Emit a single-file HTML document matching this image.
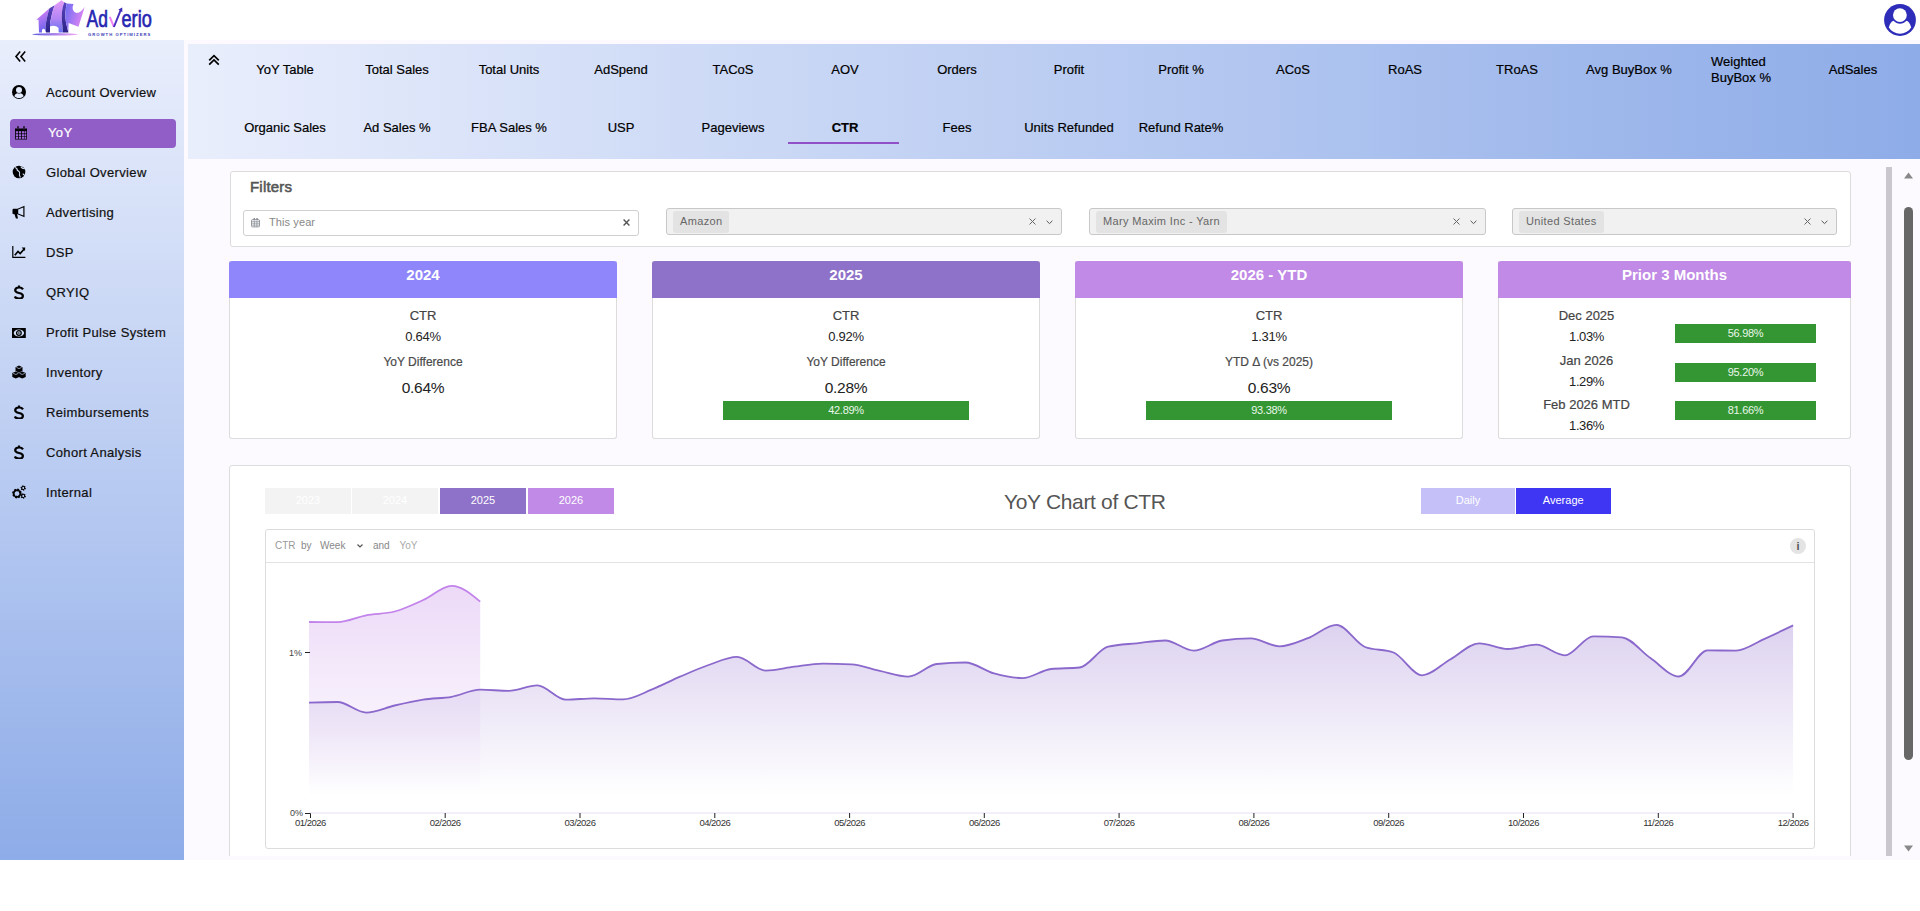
<!DOCTYPE html><html><head><meta charset="utf-8"><style>
*{box-sizing:border-box}
html,body{margin:0;padding:0}
body{width:1920px;height:911px;overflow:hidden;position:relative;background:#fff;font-family:"Liberation Sans", sans-serif;color:#222}
.a{position:absolute}
.tab{position:absolute;width:112px;text-align:center;font-size:13px;color:#000;white-space:nowrap;line-height:16px;-webkit-text-stroke:0.2px #000}
.sb{position:absolute;left:46px;font-size:13px;color:#000;line-height:16px;white-space:nowrap;letter-spacing:0.35px;-webkit-text-stroke:0.2px currentColor}
.ic{position:absolute;left:12px;width:14px;height:14px}
.inp{position:absolute;border:1px solid #d0d0d0;border-radius:3px}
.chip{position:absolute;background:#e3e3e3;border-radius:3px;font-size:11px;color:#666;line-height:20px;padding:0 7px;white-space:nowrap;letter-spacing:0.35px}
.card{position:absolute;background:#fff;border:1px solid #dcdcdc;border-radius:3px;overflow:hidden}
.ch{position:absolute;left:-1px;top:0;width:calc(100% + 2px);height:37px;border-radius:3px 3px 0 0;color:#fff;font-weight:700;font-size:15px;text-align:center;line-height:28px}
.ct{position:absolute;left:0;width:100%;text-align:center;white-space:nowrap}
.bar{position:absolute;background:#339633;color:#eaf6ea;font-size:11px;text-align:center;line-height:19px;letter-spacing:-0.3px}
.yb{position:absolute;top:488px;height:26px;width:86px;color:#fff;font-size:11px;text-align:center;line-height:24px}
.xl{position:absolute;top:817px;font-size:9.5px;color:#333;width:60px;text-align:center;white-space:nowrap;letter-spacing:-0.5px}
</style></head><body>
<div class="a" style="left:0;top:0;width:1920px;height:40px;background:#fff"></div>
<svg class="a" style="left:28px;top:0" width="130" height="40" viewBox="0 0 130 40">
<defs>
<linearGradient id="ga" x1="0" y1="0" x2="0.3" y2="1"><stop offset="0" stop-color="#ea88f6"/><stop offset="1" stop-color="#6c62ee"/></linearGradient>
<linearGradient id="gb" x1="0" y1="0" x2="0" y2="1"><stop offset="0" stop-color="#5a44c0"/><stop offset="1" stop-color="#2c2286"/></linearGradient>
<linearGradient id="gc" x1="0" y1="0" x2="0" y2="1"><stop offset="0" stop-color="#e59cf8"/><stop offset=".55" stop-color="#b486f4"/><stop offset="1" stop-color="#6670f0"/></linearGradient>
<linearGradient id="ge" x1="0" y1="0" x2="1" y2="0.4"><stop offset="0" stop-color="#6c6cf2"/><stop offset="1" stop-color="#e086f4"/></linearGradient>
<linearGradient id="rg2" x1="0" y1="0" x2="1" y2="0"><stop offset="0" stop-color="#5a5ae0"/><stop offset="1" stop-color="#e890f2" stop-opacity=".8"/></linearGradient>
</defs>
<path d="M8.3,19.8 L21.5,8.2 C19.5,14 18,22 17.6,26.5 L18,32.5 L16.8,29.5 C15.5,28 13.5,28.5 14,32.5 L11,32.5 L10.5,19.8 Z" fill="url(#ga)"/>
<path d="M21.5,8.2 L26.6,5.2 C24.5,11 22.8,18 22,24.5 L22,32.5 L18,32.5 L17.6,26.5 C18,22 19.5,14 21.5,8.2Z" fill="url(#gb)"/>
<path d="M26.6,5.2 L33.4,0.3 L36.2,2.2 C33.8,8 33.3,16 34,22 L35,32.5 L30.7,32.5 L30.5,28 C28.5,25.6 24.5,25.2 22,26.4 L22,24.5 C22.8,18 24.5,11 26.6,5.2Z" fill="url(#gc)"/>
<path d="M36.2,2.2 L38.8,3.6 C37.2,10 37,17 38,22.5 L40.4,32.5 L35,32.5 L34,22 C33.3,16 33.8,8 36.2,2.2Z" fill="url(#gb)"/>
<path d="M38.8,3.6 L45.7,4 C43.8,7 44.5,11.2 47.5,12.6 C50.5,13.8 54,11 56.7,7 L52.7,19.8 L50.5,26.8 L40.6,23 L40.4,32.5 L38,22.5 C37,17 37.2,10 38.8,3.6Z" fill="url(#ge)"/>
<ellipse cx="27" cy="34.3" rx="23" ry="1.3" fill="url(#rg2)"/>
<text x="58.6" y="27.2" font-family="Liberation Sans" font-size="24" fill="#2626b2" stroke="#2626b2" stroke-width="0.7" textLength="21.3" lengthAdjust="spacingAndGlyphs">Ad</text>
<path d="M81.8,16.8 L85.9,27" stroke="#f07ef4" stroke-width="2" fill="none"/>
<path d="M85.9,27 L92.8,9.8" stroke="#4a30c0" stroke-width="2" fill="none"/>
<path d="M90.5,9.6 L94.2,7.6 L94.4,12.3Z" fill="#3a2cb8"/>
<text x="93.5" y="27.2" font-family="Liberation Sans" font-size="24" fill="#2626b2" stroke="#2626b2" stroke-width="0.7" textLength="30.3" lengthAdjust="spacingAndGlyphs">erio</text>
<text x="60" y="36" font-family="Liberation Sans" font-size="4.2" font-weight="700" fill="#3a3ab8" textLength="62.3" lengthAdjust="spacing">GROWTH OPTIMIZERS</text>
</svg>
<svg class="a" style="left:1884px;top:4px" width="32" height="32" viewBox="0 0 32 32"><circle cx="16" cy="16" r="15.9" fill="#2d2db9"/><circle cx="15.9" cy="11.1" r="6.9" fill="#fff"/><path d="M4.8,23.5 C6,19 8,17 9.5,16.8 C11.5,18.8 13.5,19.7 16,19.7 C18.5,19.7 20.5,18.8 22.5,16.8 C24,17 26,19 27.2,23.5 C24.5,27.5 20.5,29.7 16,29.7 C11.5,29.7 7.5,27.5 4.8,23.5 Z" fill="#fff"/></svg>
<div class="a" style="left:0;top:40px;width:1920px;height:820px;background:#fcfaff"></div>
<div class="a" style="left:0;top:40px;width:184px;height:820px;background:linear-gradient(#e9eefc,#8eace8)"></div>
<div class="a" style="left:10px;top:119px;width:166px;height:29px;background:#915ec7;border-radius:4px"></div>
<div class="sb" style="top:85px;left:46px;color:#111">Account Overview</div>
<div class="sb" style="top:125px;left:48px;color:#fff">YoY</div>
<div class="sb" style="top:165px;left:46px;color:#111">Global Overview</div>
<div class="sb" style="top:205px;left:46px;color:#111">Advertising</div>
<div class="sb" style="top:245px;left:46px;color:#111">DSP</div>
<div class="sb" style="top:285px;left:46px;color:#111">QRYIQ</div>
<div class="sb" style="top:325px;left:46px;color:#111">Profit Pulse System</div>
<div class="sb" style="top:365px;left:46px;color:#111">Inventory</div>
<div class="sb" style="top:405px;left:46px;color:#111">Reimbursements</div>
<div class="sb" style="top:445px;left:46px;color:#111">Cohort Analysis</div>
<div class="sb" style="top:485px;left:46px;color:#111">Internal</div>
<svg class="a" style="left:14px;top:50px" width="13" height="13" viewBox="0 0 13 13"><path d="M6.2,1.6 L2,6.5 L6.2,11.4 M11.2,1.6 L7,6.5 L11.2,11.4" stroke="#000" stroke-width="1.6" fill="none"/></svg>
<svg class="a" style="left:12.1px;top:85px" width="14" height="14" viewBox="0 0 14 14"><circle cx="7" cy="7" r="7" fill="#000"/><circle cx="7" cy="5" r="3" fill="#e3eafb"/><path d="M2.4,11.2 C3,9 4.5,8.2 5.5,8.2 C6.4,8.6 7.6,8.6 8.5,8.2 C9.5,8.2 11,9 11.6,11.2 C10.5,12.4 9,13 7,13 C5,13 3.5,12.4 2.4,11.2Z" fill="#e3eafb"/></svg>
<svg class="a" style="left:14.2px;top:126px" width="14" height="14" viewBox="0 0 14 14"><path d="M1,2.5 H13 V13.5 H1Z" fill="#000"/><rect x="3" y="0.2" width="2" height="3.5" rx="1" fill="#000"/><rect x="9" y="0.2" width="2" height="3.5" rx="1" fill="#000"/><rect x="3.6" y="1" width="0.8" height="2.4" fill="#7a4fb0"/><rect x="9.6" y="1" width="0.8" height="2.4" fill="#7a4fb0"/><g fill="#a066dc"><rect x="1.8" y="5.2" width="2.2" height="2.2"/><rect x="4.8" y="5.2" width="2.2" height="2.2"/><rect x="7.8" y="5.2" width="2.2" height="2.2"/><rect x="10.5" y="5.2" width="1.8" height="2.2"/><rect x="1.8" y="8.2" width="2.2" height="2.2"/><rect x="4.8" y="8.2" width="2.2" height="2.2"/><rect x="7.8" y="8.2" width="2.2" height="2.2"/><rect x="10.5" y="8.2" width="1.8" height="2.2"/><rect x="1.8" y="11" width="2.2" height="1.8"/><rect x="4.8" y="11" width="2.2" height="1.8"/><rect x="7.8" y="11" width="2.2" height="1.8"/><rect x="10.5" y="11" width="1.8" height="1.8"/></g></svg>
<svg class="a" style="left:12.1px;top:165px" width="14" height="14" viewBox="0 0 14 14"><circle cx="7" cy="7" r="6.3" fill="#000"/><path d="M3.2,2.6 C4.6,3.2 5.6,3.8 5.2,5.2 C6.2,6.4 8,6.2 7.6,8.2 C6.8,9.6 7.4,10.8 8.4,12.6 M8.8,1.6 C9.6,2.8 10.8,3.6 12.2,3.8 M10.8,8.6 C11.4,9.4 12,10 12.6,10" stroke="#d6e0f8" stroke-width="1.1" fill="none"/></svg>
<svg class="a" style="left:12.1px;top:205px" width="14" height="14" viewBox="0 0 14 14"><path d="M0.5,5 C0.5,4.2 1,3.8 1.8,3.8 L5.5,3.8 L12.5,0.8 L12.5,12.2 L5.5,9.2 L1.8,9.2 C1,9.2 0.5,8.8 0.5,8 Z" fill="#000"/><path d="M6.2,4.6 L11.3,2.5 L11.3,10.5 L6.2,8.4Z" fill="#d6e0f8"/><path d="M2.5,9 L3.6,12.8 C3.8,13.4 4.2,13.6 4.8,13.6 L6,13.6 L5,9Z" fill="#000"/></svg>
<svg class="a" style="left:12.1px;top:245px" width="14" height="14" viewBox="0 0 14 14"><path d="M0.8,1 L0.8,12.4 L13.4,12.4" stroke="#000" stroke-width="1.2" fill="none"/><path d="M2.8,10.2 L6,6.4 L8.2,8.6 L12.2,4" stroke="#000" stroke-width="1.7" fill="none"/><path d="M9.6,2.6 L13.2,2.4 L13,6Z" fill="#000"/></svg>
<svg class="a" style="left:12.1px;top:285px" width="14" height="14" viewBox="0 0 14 14"><path d="M11,4.4 C10.2,3 8.8,2.5 7,2.5 C4.8,2.5 3.2,3.6 3.2,5.3 C3.2,7.1 5,7.6 7,8 C9.2,8.4 10.9,9 10.9,10.9 C10.9,12.6 9.2,13.6 7,13.6 C5,13.6 3.5,13 2.8,11.5 M7,0.4 V2.5 M7,13.6 V15.6" stroke="#000" stroke-width="2.2" fill="none"/></svg>
<svg class="a" style="left:12.1px;top:325px" width="14" height="14" viewBox="0 0 14 14"><rect x="0" y="3" width="13.8" height="10" fill="#000"/><ellipse cx="6.9" cy="8" rx="5.2" ry="3.5" fill="#d2ddf6"/><circle cx="6.9" cy="8" r="2.3" fill="none" stroke="#000" stroke-width="1.3"/><path d="M6.9,6.8 V9.2" stroke="#000" stroke-width="0.9"/></svg>
<svg class="a" style="left:12.1px;top:365px" width="14" height="14" viewBox="0 0 14 14"><path d="M7,0.5 L10.5,2.2 L10.5,6 L7,7.6 L3.5,6 L3.5,2.2Z" fill="#000"/><path d="M3.8,6.4 L7.3,8.1 L7.3,11.9 L3.8,13.6 L0.3,11.9 L0.3,8.1Z" fill="#000"/><path d="M10.2,6.4 L13.7,8.1 L13.7,11.9 L10.2,13.6 L6.7,11.9 L6.7,8.1Z" fill="#000"/><path d="M4.4,2.4 L7,3.6 L9.6,2.4 M1.2,8.3 L3.8,9.5 L6.4,8.3 M7.6,8.3 L10.2,9.5 L12.8,8.3" stroke="#c9d6f3" stroke-width="0.7" fill="none"/></svg>
<svg class="a" style="left:12.1px;top:405px" width="14" height="14" viewBox="0 0 14 14"><path d="M11,4.4 C10.2,3 8.8,2.5 7,2.5 C4.8,2.5 3.2,3.6 3.2,5.3 C3.2,7.1 5,7.6 7,8 C9.2,8.4 10.9,9 10.9,10.9 C10.9,12.6 9.2,13.6 7,13.6 C5,13.6 3.5,13 2.8,11.5 M7,0.4 V2.5 M7,13.6 V15.6" stroke="#000" stroke-width="2.2" fill="none"/></svg>
<svg class="a" style="left:12.1px;top:445px" width="14" height="14" viewBox="0 0 14 14"><path d="M11,4.4 C10.2,3 8.8,2.5 7,2.5 C4.8,2.5 3.2,3.6 3.2,5.3 C3.2,7.1 5,7.6 7,8 C9.2,8.4 10.9,9 10.9,10.9 C10.9,12.6 9.2,13.6 7,13.6 C5,13.6 3.5,13 2.8,11.5 M7,0.4 V2.5 M7,13.6 V15.6" stroke="#000" stroke-width="2.2" fill="none"/></svg>
<svg class="a" style="left:12.1px;top:485px" width="14" height="14" viewBox="0 0 14 14"><circle cx="5" cy="8.5" r="3.6" fill="none" stroke="#000" stroke-width="2.6" stroke-dasharray="1.6 1.2"/><circle cx="5" cy="8.5" r="3.4" fill="none" stroke="#000" stroke-width="1.6"/><circle cx="5" cy="8.5" r="1.3" fill="#bccbf0"/><circle cx="11.2" cy="3" r="1.9" fill="none" stroke="#000" stroke-width="1.5" stroke-dasharray="1 0.8"/><circle cx="11.2" cy="3" r="1.6" fill="none" stroke="#000" stroke-width="1"/><circle cx="11.2" cy="11" r="1.9" fill="none" stroke="#000" stroke-width="1.5" stroke-dasharray="1 0.8"/><circle cx="11.2" cy="11" r="1.6" fill="none" stroke="#000" stroke-width="1"/></svg>
<div class="a" style="left:188px;top:44px;width:1732px;height:115px;background:linear-gradient(to right,#e9eefc,#8eace8)"></div>
<svg class="a" style="left:208px;top:54px" width="12" height="12" viewBox="0 0 12 12"><path d="M1.2,6.3 L6,1.6 L10.8,6.3 M1.2,10.6 L6,5.9 L10.8,10.6" stroke="#000" stroke-width="1.7" fill="none"/></svg>
<div class="tab" style="left:229px;top:62px">YoY Table</div>
<div class="tab" style="left:341px;top:62px">Total Sales</div>
<div class="tab" style="left:453px;top:62px">Total Units</div>
<div class="tab" style="left:565px;top:62px">AdSpend</div>
<div class="tab" style="left:677px;top:62px">TACoS</div>
<div class="tab" style="left:789px;top:62px">AOV</div>
<div class="tab" style="left:901px;top:62px">Orders</div>
<div class="tab" style="left:1013px;top:62px">Profit</div>
<div class="tab" style="left:1125px;top:62px">Profit %</div>
<div class="tab" style="left:1237px;top:62px">ACoS</div>
<div class="tab" style="left:1349px;top:62px">RoAS</div>
<div class="tab" style="left:1461px;top:62px">TRoAS</div>
<div class="tab" style="left:1573px;top:62px">Avg BuyBox %</div>
<div class="tab" style="left:1685px;top:54px;line-height:16px;text-align:center"><div style="display:inline-block;text-align:left">Weighted<br>BuyBox %</div></div>
<div class="tab" style="left:1797px;top:62px">AdSales</div>
<div class="tab" style="left:229px;top:120px;">Organic Sales</div>
<div class="tab" style="left:341px;top:120px;">Ad Sales %</div>
<div class="tab" style="left:453px;top:120px;">FBA Sales %</div>
<div class="tab" style="left:565px;top:120px;">USP</div>
<div class="tab" style="left:677px;top:120px;">Pageviews</div>
<div class="tab" style="left:789px;top:120px;font-weight:700;color:#000">CTR</div>
<div class="tab" style="left:901px;top:120px;">Fees</div>
<div class="tab" style="left:1013px;top:120px;">Units Refunded</div>
<div class="tab" style="left:1125px;top:120px;">Refund Rate%</div>
<div class="a" style="left:788px;top:142px;width:111px;height:2px;background:#9050c8"></div>
<div class="card" style="left:230px;top:171px;width:1621px;height:76px"></div>
<div class="a" style="left:250px;top:178px;font-size:15px;font-weight:400;color:#555;line-height:17px;-webkit-text-stroke:0.55px #555;letter-spacing:0.2px">Filters</div>
<div class="inp" style="left:243px;top:210px;width:396px;height:26px;background:#fff"></div>
<svg class="a" style="left:251px;top:217.8px" width="9" height="10" viewBox="0 0 9 10"><rect x="2.6" y="0" width="1.3" height="2.2" fill="#7d818b"/><rect x="5.4" y="0" width="1.3" height="2.2" fill="#7d818b"/><rect x="0.5" y="1.6" width="8" height="7.3" rx="1" fill="none" stroke="#80858e" stroke-width="0.8"/><path d="M0.5,3.3 H8.5 M3.3,3.3 V8.9 M5.9,3.3 V8.9 M0.5,5.2 H8.5 M0.5,7.1 H8.5" stroke="#80858e" stroke-width="0.7"/></svg>
<div class="a" style="left:269px;top:215px;font-size:11px;color:#888;line-height:14px;letter-spacing:0.1px">This year</div>
<svg class="a" style="left:623px;top:219px" width="7" height="7" viewBox="0 0 7 7"><path d="M0.6,0.6 L6.4,6.4 M6.4,0.6 L0.6,6.4" stroke="#555" stroke-width="1.4"/></svg>
<div class="inp" style="left:666px;top:208px;width:396px;height:27px;background:#f1f1f1;border-color:#c8c8c8"></div>
<div class="chip" style="left:673px;top:210.5px;height:22px">Amazon</div>
<svg class="a" style="left:1029px;top:218px" width="7" height="7" viewBox="0 0 7 7"><path d="M0.5,0.5 L6.5,6.5 M6.5,0.5 L0.5,6.5" stroke="#666" stroke-width="1"/></svg>
<svg class="a" style="left:1046px;top:219.5px" width="7" height="5" viewBox="0 0 7 5"><path d="M0.6,0.8 L3.5,3.6 L6.4,0.8" stroke="#555" stroke-width="1" fill="none"/></svg>
<div class="inp" style="left:1089px;top:208px;width:397px;height:27px;background:#f1f1f1;border-color:#c8c8c8"></div>
<div class="chip" style="left:1096px;top:210.5px;height:22px">Mary Maxim Inc - Yarn</div>
<svg class="a" style="left:1453px;top:218px" width="7" height="7" viewBox="0 0 7 7"><path d="M0.5,0.5 L6.5,6.5 M6.5,0.5 L0.5,6.5" stroke="#666" stroke-width="1"/></svg>
<svg class="a" style="left:1470px;top:219.5px" width="7" height="5" viewBox="0 0 7 5"><path d="M0.6,0.8 L3.5,3.6 L6.4,0.8" stroke="#555" stroke-width="1" fill="none"/></svg>
<div class="inp" style="left:1512px;top:208px;width:325px;height:27px;background:#f1f1f1;border-color:#c8c8c8"></div>
<div class="chip" style="left:1519px;top:210.5px;height:22px">United States</div>
<svg class="a" style="left:1804px;top:218px" width="7" height="7" viewBox="0 0 7 7"><path d="M0.5,0.5 L6.5,6.5 M6.5,0.5 L0.5,6.5" stroke="#666" stroke-width="1"/></svg>
<svg class="a" style="left:1821px;top:219.5px" width="7" height="5" viewBox="0 0 7 5"><path d="M0.6,0.8 L3.5,3.6 L6.4,0.8" stroke="#555" stroke-width="1" fill="none"/></svg>
<div class="card" style="left:229px;top:260px;width:388px;height:179px;overflow:visible;border-top-color:transparent"><div class="ch" style="background:#8f86fb">2024</div></div>
<div class="card" style="left:652px;top:260px;width:388px;height:179px;overflow:visible;border-top-color:transparent"><div class="ch" style="background:#8e71c8">2025</div></div>
<div class="card" style="left:1075px;top:260px;width:388px;height:179px;overflow:visible;border-top-color:transparent"><div class="ch" style="background:#c08ae6">2026 - YTD</div></div>
<div class="card" style="left:1498px;top:260px;width:353px;height:179px;overflow:visible;border-top-color:transparent"><div class="ch" style="background:#c08ae6">Prior 3 Months</div></div>
<div class="ct" style="left:229px;width:388px;top:308px;font-size:13px;color:#444;line-height:16px;-webkit-text-stroke:0.2px #444">CTR</div>
<div class="ct" style="left:229px;width:388px;top:329px;font-size:13px;color:#222;line-height:16px;letter-spacing:-0.3px">0.64%</div>
<div class="ct" style="left:229px;width:388px;top:355px;font-size:12px;color:#4a4a4a;line-height:14px;font-weight:400;-webkit-text-stroke:0.2px #4a4a4a">YoY Difference</div>
<div class="ct" style="left:229px;width:388px;top:379px;font-size:15.5px;color:#222;line-height:18px;letter-spacing:-0.3px">0.64%</div>
<div class="ct" style="left:652px;width:388px;top:308px;font-size:13px;color:#444;line-height:16px;-webkit-text-stroke:0.2px #444">CTR</div>
<div class="ct" style="left:652px;width:388px;top:329px;font-size:13px;color:#222;line-height:16px;letter-spacing:-0.3px">0.92%</div>
<div class="ct" style="left:652px;width:388px;top:355px;font-size:12px;color:#4a4a4a;line-height:14px;font-weight:400;-webkit-text-stroke:0.2px #4a4a4a">YoY Difference</div>
<div class="ct" style="left:652px;width:388px;top:379px;font-size:15.5px;color:#222;line-height:18px;letter-spacing:-0.3px">0.28%</div>
<div class="bar" style="left:723.0px;top:401px;width:246px;height:19px">42.89%</div>
<div class="ct" style="left:1075px;width:388px;top:308px;font-size:13px;color:#444;line-height:16px;-webkit-text-stroke:0.2px #444">CTR</div>
<div class="ct" style="left:1075px;width:388px;top:329px;font-size:13px;color:#222;line-height:16px;letter-spacing:-0.3px">1.31%</div>
<div class="ct" style="left:1075px;width:388px;top:355px;font-size:12px;color:#4a4a4a;line-height:14px;font-weight:400;-webkit-text-stroke:0.2px #4a4a4a">YTD &#916; (vs 2025)</div>
<div class="ct" style="left:1075px;width:388px;top:379px;font-size:15.5px;color:#222;line-height:18px;letter-spacing:-0.3px">0.63%</div>
<div class="bar" style="left:1146.0px;top:401px;width:246px;height:19px">93.38%</div>
<div class="ct" style="left:1498px;width:177px;top:308px;font-size:13px;color:#444;line-height:16px;-webkit-text-stroke:0.2px #444">Dec 2025</div>
<div class="ct" style="left:1498px;width:177px;top:329px;font-size:13px;color:#222;line-height:16px;letter-spacing:-0.4px">1.03%</div>
<div class="bar" style="left:1675px;top:324px;width:141px;height:19px">56.98%</div>
<div class="ct" style="left:1498px;width:177px;top:353px;font-size:13px;color:#444;line-height:16px;-webkit-text-stroke:0.2px #444">Jan 2026</div>
<div class="ct" style="left:1498px;width:177px;top:374px;font-size:13px;color:#222;line-height:16px;letter-spacing:-0.4px">1.29%</div>
<div class="bar" style="left:1675px;top:363px;width:141px;height:19px">95.20%</div>
<div class="ct" style="left:1498px;width:177px;top:397px;font-size:13px;color:#444;line-height:16px;-webkit-text-stroke:0.2px #444">Feb 2026 MTD</div>
<div class="ct" style="left:1498px;width:177px;top:418px;font-size:13px;color:#222;line-height:16px;letter-spacing:-0.4px">1.36%</div>
<div class="bar" style="left:1675px;top:401px;width:141px;height:19px">81.66%</div>
<div class="a" style="left:229px;top:465px;width:1622px;height:391px;overflow:hidden"><div class="card" style="left:0;top:0;width:1622px;height:420px"></div></div>
<div class="yb" style="left:265px;background:#f3f3f3">2023</div>
<div class="yb" style="left:352px;background:#f3f3f3">2024</div>
<div class="yb" style="left:440px;background:#8e71c8">2025</div>
<div class="yb" style="left:528px;background:#c08ae6">2026</div>
<div class="a" style="left:1004px;top:490px;font-size:21px;color:#555;line-height:24px;white-space:nowrap;letter-spacing:-0.33px">YoY Chart of CTR</div>
<div class="yb" style="left:1421px;width:94px;background:#c5c1f8">Daily</div>
<div class="yb" style="left:1516px;width:94.5px;background:#3f36f4">Average</div>
<div class="a" style="left:265px;top:529px;width:1550px;height:320px;border:1px solid #dcdcdc;border-radius:3px;background:#fff"></div>
<div class="a" style="left:266px;top:562px;width:1548px;height:1px;background:#e2e2e2"></div>
<div class="a" style="left:275px;top:540px;font-size:10px;color:#999;line-height:12px;white-space:nowrap">CTR</div>
<div class="a" style="left:301px;top:540px;font-size:10px;color:#888;line-height:12px;white-space:nowrap">by</div>
<div class="a" style="left:320px;top:540px;font-size:10px;color:#888;line-height:12px;white-space:nowrap">Week</div>
<div class="a" style="left:373px;top:540px;font-size:10px;color:#888;line-height:12px;white-space:nowrap">and</div>
<div class="a" style="left:399.5px;top:540px;font-size:10px;color:#aaa;line-height:12px;white-space:nowrap">YoY</div>
<svg class="a" style="left:357px;top:544px" width="6" height="4" viewBox="0 0 6 4"><path d="M0.5,0.5 L3,3 L5.5,0.5" stroke="#555" stroke-width="1.2" fill="none"/></svg>
<div class="a" style="left:1790px;top:538px;width:16px;height:16px;border-radius:8px;background:#e4e4e4;color:#555;font-size:11px;font-weight:700;text-align:center;line-height:16px">i</div>
<svg class="a" style="left:0;top:0" width="1920" height="911">
<defs>
<linearGradient id="g25" x1="0" y1="0" x2="0" y2="1" gradientUnits="objectBoundingBox"><stop offset="0" stop-color="#d9cdee" stop-opacity=".9"/><stop offset="1" stop-color="#d9cdee" stop-opacity="0"/></linearGradient>
<linearGradient id="g26" x1="0" y1="0" x2="0" y2="1"><stop offset="0" stop-color="#e6cdf5" stop-opacity=".75"/><stop offset="1" stop-color="#e6cdf5" stop-opacity="0"/></linearGradient>
</defs>
<path d="M309.0,622.0C318.5,622.0 328.0,622.1 337.5,622.1C347.1,622.1 356.6,617.1 366.1,615.3C375.6,613.5 385.1,614.0 394.6,611.5C404.1,609.0 413.6,604.3 423.2,600.0C432.7,595.7 442.2,585.8 451.7,585.8C461.2,585.8 470.7,593.7 480.2,601.6 L480.2,792 L309,792 Z" fill="url(#g26)"/>
<path d="M309.0,702.6C318.5,702.3 328.0,702.0 337.5,702.0C347.1,702.0 356.6,712.6 366.1,712.6C375.6,712.6 385.1,707.7 394.6,705.5C404.1,703.3 413.6,701.1 423.2,699.6C432.7,698.1 442.2,698.4 451.7,696.8C461.2,695.1 470.7,689.7 480.2,689.7C489.8,689.7 499.3,690.8 508.8,690.8C518.3,690.8 527.8,685.3 537.3,685.3C546.8,685.3 556.3,699.7 565.9,699.7C575.4,699.7 584.9,698.3 594.4,698.3C603.9,698.3 613.4,699.4 622.9,699.4C632.5,699.4 642.0,693.5 651.5,689.7C661.0,685.9 670.5,680.8 680.0,676.7C689.5,672.6 699.1,668.3 708.6,665.0C718.1,661.7 727.6,656.9 737.1,656.9C746.6,656.9 756.1,670.6 765.6,670.6C775.2,670.6 784.7,667.9 794.2,666.7C803.7,665.5 813.2,663.6 822.7,663.6C832.2,663.6 841.8,663.9 851.3,664.4C860.8,664.9 870.3,668.9 879.8,670.9C889.3,672.9 898.8,676.6 908.3,676.6C917.9,676.6 927.4,665.0 936.9,664.0C946.4,663.0 955.9,662.5 965.4,662.5C974.9,662.5 984.5,670.8 994.0,673.4C1003.5,676.0 1013.0,678.1 1022.5,678.1C1032.0,678.1 1041.5,670.0 1051.0,669.0C1060.6,668.0 1070.1,668.5 1079.6,667.5C1089.1,666.5 1098.6,649.0 1108.1,646.7C1117.6,644.4 1127.2,644.3 1136.7,643.3C1146.2,642.3 1155.7,640.5 1165.2,640.5C1174.7,640.5 1184.2,650.6 1193.8,650.6C1203.3,650.6 1212.8,641.9 1222.3,640.5C1231.8,639.1 1241.3,638.4 1250.8,638.4C1260.3,638.4 1269.9,646.3 1279.4,646.3C1288.9,646.3 1298.4,641.7 1307.9,638.1C1317.4,634.5 1326.9,624.8 1336.5,624.8C1346.0,624.8 1355.5,643.3 1365.0,647.0C1374.5,650.7 1384.0,648.8 1393.5,652.5C1403.0,656.2 1412.6,675.3 1422.1,675.3C1431.6,675.3 1441.1,664.5 1450.6,659.2C1460.1,653.9 1469.6,643.3 1479.2,643.3C1488.7,643.3 1498.2,649.0 1507.7,649.0C1517.2,649.0 1526.7,644.7 1536.2,644.7C1545.8,644.7 1555.3,655.3 1564.8,655.3C1574.3,655.3 1583.8,636.3 1593.3,636.3C1602.8,636.3 1612.3,636.6 1621.9,637.3C1631.4,638.0 1640.9,651.6 1650.4,658.1C1659.9,664.6 1669.4,676.5 1678.9,676.5C1688.5,676.5 1698.0,650.4 1707.5,650.4C1717.0,650.4 1726.5,650.6 1736.0,650.6C1745.5,650.6 1755.0,642.9 1764.6,638.8C1774.1,634.5 1783.6,630.0 1793.1,625.4 L1793.1,796 L309,796 Z" fill="url(#g25)"/>
<path d="M309.0,622.0C318.5,622.0 328.0,622.1 337.5,622.1C347.1,622.1 356.6,617.1 366.1,615.3C375.6,613.5 385.1,614.0 394.6,611.5C404.1,609.0 413.6,604.3 423.2,600.0C432.7,595.7 442.2,585.8 451.7,585.8C461.2,585.8 470.7,593.7 480.2,601.6" fill="none" stroke="#c283ea" stroke-width="1.8"/>
<path d="M309.0,702.6C318.5,702.3 328.0,702.0 337.5,702.0C347.1,702.0 356.6,712.6 366.1,712.6C375.6,712.6 385.1,707.7 394.6,705.5C404.1,703.3 413.6,701.1 423.2,699.6C432.7,698.1 442.2,698.4 451.7,696.8C461.2,695.1 470.7,689.7 480.2,689.7C489.8,689.7 499.3,690.8 508.8,690.8C518.3,690.8 527.8,685.3 537.3,685.3C546.8,685.3 556.3,699.7 565.9,699.7C575.4,699.7 584.9,698.3 594.4,698.3C603.9,698.3 613.4,699.4 622.9,699.4C632.5,699.4 642.0,693.5 651.5,689.7C661.0,685.9 670.5,680.8 680.0,676.7C689.5,672.6 699.1,668.3 708.6,665.0C718.1,661.7 727.6,656.9 737.1,656.9C746.6,656.9 756.1,670.6 765.6,670.6C775.2,670.6 784.7,667.9 794.2,666.7C803.7,665.5 813.2,663.6 822.7,663.6C832.2,663.6 841.8,663.9 851.3,664.4C860.8,664.9 870.3,668.9 879.8,670.9C889.3,672.9 898.8,676.6 908.3,676.6C917.9,676.6 927.4,665.0 936.9,664.0C946.4,663.0 955.9,662.5 965.4,662.5C974.9,662.5 984.5,670.8 994.0,673.4C1003.5,676.0 1013.0,678.1 1022.5,678.1C1032.0,678.1 1041.5,670.0 1051.0,669.0C1060.6,668.0 1070.1,668.5 1079.6,667.5C1089.1,666.5 1098.6,649.0 1108.1,646.7C1117.6,644.4 1127.2,644.3 1136.7,643.3C1146.2,642.3 1155.7,640.5 1165.2,640.5C1174.7,640.5 1184.2,650.6 1193.8,650.6C1203.3,650.6 1212.8,641.9 1222.3,640.5C1231.8,639.1 1241.3,638.4 1250.8,638.4C1260.3,638.4 1269.9,646.3 1279.4,646.3C1288.9,646.3 1298.4,641.7 1307.9,638.1C1317.4,634.5 1326.9,624.8 1336.5,624.8C1346.0,624.8 1355.5,643.3 1365.0,647.0C1374.5,650.7 1384.0,648.8 1393.5,652.5C1403.0,656.2 1412.6,675.3 1422.1,675.3C1431.6,675.3 1441.1,664.5 1450.6,659.2C1460.1,653.9 1469.6,643.3 1479.2,643.3C1488.7,643.3 1498.2,649.0 1507.7,649.0C1517.2,649.0 1526.7,644.7 1536.2,644.7C1545.8,644.7 1555.3,655.3 1564.8,655.3C1574.3,655.3 1583.8,636.3 1593.3,636.3C1602.8,636.3 1612.3,636.6 1621.9,637.3C1631.4,638.0 1640.9,651.6 1650.4,658.1C1659.9,664.6 1669.4,676.5 1678.9,676.5C1688.5,676.5 1698.0,650.4 1707.5,650.4C1717.0,650.4 1726.5,650.6 1736.0,650.6C1745.5,650.6 1755.0,642.9 1764.6,638.8C1774.1,634.5 1783.6,630.0 1793.1,625.4" fill="none" stroke="#8a68cc" stroke-width="1.8"/>
<line x1="309" y1="813" x2="1793" y2="813" stroke="#e8def6" stroke-width="1"/>
<path d="M305,813.5 H310.5 V818" stroke="#222" stroke-width="1" fill="none"/>
<path d="M305,652.5 H310" stroke="#222" stroke-width="1"/>

<line x1="445.2" y1="813" x2="445.2" y2="818" stroke="#222" stroke-width="1"/>
<line x1="580.0" y1="813" x2="580.0" y2="818" stroke="#222" stroke-width="1"/>
<line x1="714.8" y1="813" x2="714.8" y2="818" stroke="#222" stroke-width="1"/>
<line x1="849.6" y1="813" x2="849.6" y2="818" stroke="#222" stroke-width="1"/>
<line x1="984.3" y1="813" x2="984.3" y2="818" stroke="#222" stroke-width="1"/>
<line x1="1119.1" y1="813" x2="1119.1" y2="818" stroke="#222" stroke-width="1"/>
<line x1="1253.9" y1="813" x2="1253.9" y2="818" stroke="#222" stroke-width="1"/>
<line x1="1388.7" y1="813" x2="1388.7" y2="818" stroke="#222" stroke-width="1"/>
<line x1="1523.5" y1="813" x2="1523.5" y2="818" stroke="#222" stroke-width="1"/>
<line x1="1658.3" y1="813" x2="1658.3" y2="818" stroke="#222" stroke-width="1"/>
<line x1="1793.1" y1="813" x2="1793.1" y2="818" stroke="#222" stroke-width="1"/>
</svg>
<div class="a" style="left:289px;top:648px;font-size:9px;color:#444;line-height:10px">1%</div>
<div class="a" style="left:290px;top:808px;font-size:9px;color:#444;line-height:10px">0%</div>
<div class="xl" style="left:280.4px">01/2026</div>
<div class="xl" style="left:415.2px">02/2026</div>
<div class="xl" style="left:550.0px">03/2026</div>
<div class="xl" style="left:684.8px">04/2026</div>
<div class="xl" style="left:819.6px">05/2026</div>
<div class="xl" style="left:954.3px">06/2026</div>
<div class="xl" style="left:1089.1px">07/2026</div>
<div class="xl" style="left:1223.9px">08/2026</div>
<div class="xl" style="left:1358.7px">09/2026</div>
<div class="xl" style="left:1493.5px">10/2026</div>
<div class="xl" style="left:1628.3px">11/2026</div>
<div class="xl" style="left:1763.1px">12/2026</div>
<div class="a" style="left:1886px;top:167px;width:6px;height:689px;background:#cac8ce"></div>
<div class="a" style="left:1904px;top:207px;width:9px;height:553px;background:#676767;border-radius:5px"></div>
<svg class="a" style="left:1904px;top:172px" width="9" height="7" viewBox="0 0 9 7"><path d="M4.5,0.5 L9,6.5 L0,6.5Z" fill="#888"/></svg>
<svg class="a" style="left:1904px;top:845px" width="9" height="7" viewBox="0 0 9 7"><path d="M0,0.5 L9,0.5 L4.5,6.5Z" fill="#888"/></svg>
</body></html>
